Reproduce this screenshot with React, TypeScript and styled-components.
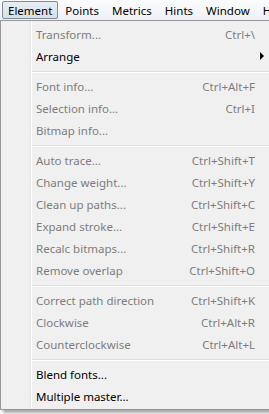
import React from "react";
import styled, { createGlobalStyle } from "styled-components";

const Global = createGlobalStyle`
  html, body { margin: 0; padding: 0; overflow: hidden; background: #f0f0f0; }
  body { font-family: "Noto Sans", "Open Sans", sans-serif; }
`;

const Screen = styled.div`
  width: 269px;
  height: 414px;
  overflow: hidden;
  position: relative;
  background: #ffffff;
`;

const MenuBar = styled.div`
  height: 20px;
  display: flex;
  align-items: center;
  padding-left: 2px;
  background: linear-gradient(to bottom, #fbfcfd 0%, #eef1f6 100%);
  font-size: 11.5px;
  color: #000;
  white-space: nowrap;
`;

const BarItem = styled.div<{ $active?: boolean }>`
  height: 16px;
  display: flex;
  align-items: center;
  padding: 0 5px;
  border: 1px solid ${(p) => (p.$active ? "#7f8c9b" : "transparent")};
  border-radius: 2px;
  background: ${(p) =>
    p.$active ? "linear-gradient(to bottom, #e9eef5, #d7dfe9)" : "transparent"};
  margin-right: 1px;
`;

const Panel = styled.div`
  width: 284px;
  box-sizing: border-box;
  border: 1px solid #979797;
  padding: 2px;
  background:
    linear-gradient(to right, transparent 29px, #e2e3e3 29px, #e2e3e3 30px, #ffffff 30px, #ffffff 31px, transparent 31px),
    #f0f0f0;
  box-shadow: 3px 3px 3px rgba(0, 0, 0, 0.35);
  font-size: 11.5px;
`;

const Row = styled.div<{ $disabled?: boolean }>`
  height: 22px;
  display: grid;
  grid-template-columns: 1fr auto 20px;
  align-items: center;
  padding: 0 6px 0 33px;
  color: ${(p) => (p.$disabled ? "#7d7d7d" : "#000")};
  white-space: nowrap;
`;

const Shortcut = styled.span`
  text-align: right;
`;

const ArrowCell = styled.span`
  display: flex;
  align-items: center;
  padding-left: 5px;
`;

const Arrow = styled.span`
  width: 0;
  height: 0;
  border-top: 4px solid transparent;
  border-bottom: 4px solid transparent;
  border-left: 4px solid #000;
`;

const Separator = styled.div`
  height: 8px;
  box-sizing: border-box;
  padding: 4px 0 0 29px;
  &::after {
    content: "";
    display: block;
    height: 0;
    border-top: 1px solid #e0e0e0;
    border-bottom: 1px solid #ffffff;
  }
`;

type Item = { label: string; shortcut?: string; disabled?: boolean; sub?: boolean } | "sep";

const items: Item[] = [
  { label: "Transform...", shortcut: "Ctrl+\\", disabled: true },
  { label: "Arrange", sub: true },
  "sep",
  { label: "Font info...", shortcut: "Ctrl+Alt+F", disabled: true },
  { label: "Selection info...", shortcut: "Ctrl+I", disabled: true },
  { label: "Bitmap info...", disabled: true },
  "sep",
  { label: "Auto trace...", shortcut: "Ctrl+Shift+T", disabled: true },
  { label: "Change weight...", shortcut: "Ctrl+Shift+Y", disabled: true },
  { label: "Clean up paths...", shortcut: "Ctrl+Shift+C", disabled: true },
  { label: "Expand stroke...", shortcut: "Ctrl+Shift+E", disabled: true },
  { label: "Recalc bitmaps...", shortcut: "Ctrl+Shift+R", disabled: true },
  { label: "Remove overlap", shortcut: "Ctrl+Shift+O", disabled: true },
  "sep",
  { label: "Correct path direction", shortcut: "Ctrl+Shift+K", disabled: true },
  { label: "Clockwise", shortcut: "Ctrl+Alt+R", disabled: true },
  { label: "Counterclockwise", shortcut: "Ctrl+Alt+L", disabled: true },
  "sep",
  { label: "Blend fonts..." },
  { label: "Multiple master..." },
];

const bar = ["Element", "Points", "Metrics", "Hints", "Window", "Help"];

export default function App() {
  return (
    <Screen>
      <Global />
      <MenuBar>
        {bar.map((b, i) => (
          <BarItem key={b} $active={i === 0}>
            {b}
          </BarItem>
        ))}
      </MenuBar>
      <Panel>
        {items.map((it, i) =>
          it === "sep" ? (
            <Separator key={i} />
          ) : (
            <Row key={i} $disabled={it.disabled}>
              <span>{it.label}</span>
              <Shortcut>{it.shortcut ?? ""}</Shortcut>
              <ArrowCell>{it.sub ? <Arrow /> : null}</ArrowCell>
            </Row>
          )
        )}
      </Panel>
    </Screen>
  );
}
